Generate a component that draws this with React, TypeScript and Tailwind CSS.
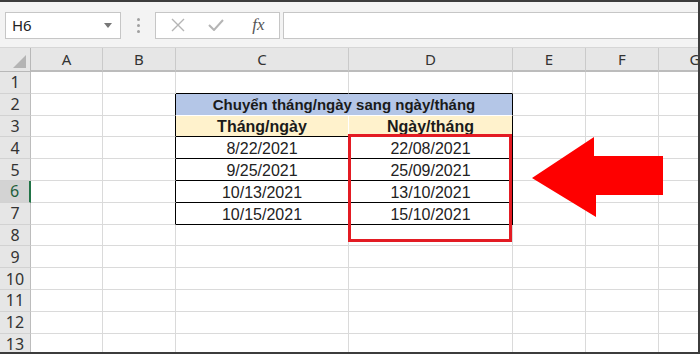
import React from "react"

const COLS = ["A", "B", "C", "D", "E", "F", "G"]
const ROWS = Array.from({ length: 13 }, (_, i) => i + 1)

const dates: Record<number, [string, string]> = {
  4: ["8/22/2021", "22/08/2021"],
  5: ["9/25/2021", "25/09/2021"],
  6: ["10/13/2021", "13/10/2021"],
  7: ["10/15/2021", "15/10/2021"],
}

const ui = { fontFamily: '"Noto Sans", "Open Sans", sans-serif' }
const cellFont = { fontFamily: '"Liberation Sans", Arial, sans-serif' }

function Cell({ row, col }: { row: number; col: string }) {
  const base = "border-r border-b border-[#dadada] bg-white"
  // table lives in C2:D7
  if (row === 1 && (col === "C" || col === "D")) {
    return <div className="border-r border-b border-r-[#dadada] border-b-black bg-white" />
  }
  if (col === "B" && row >= 2 && row <= 7) {
    return <div className="border-r border-b border-r-black border-b-[#dadada] bg-white" />
  }
  if (row === 2 && col === "C") {
    return (
      <div
        className="col-span-2 flex items-center justify-center whitespace-nowrap border-r border-b border-r-black border-b-white bg-[#b4c6e7] pt-[2px] text-[15px] font-bold text-[#1a1a1a]"
        style={cellFont}
      >
        Chuyển tháng/ngày sang ngày/tháng
      </div>
    )
  }
  if (row === 2 && col === "D") return null
  if (row === 3 && (col === "C" || col === "D")) {
    return (
      <div
        className={`flex items-center justify-center whitespace-nowrap border-r border-b border-b-black bg-[#fff2cc] pt-[2px] text-[16px] font-bold text-[#1a1a1a] ${
          col === "C" ? "border-r-white" : "border-r-black"
        }`}
        style={cellFont}
      >
        {col === "C" ? "Tháng/ngày" : "Ngày/tháng"}
      </div>
    )
  }
  if (row >= 4 && row <= 7 && (col === "C" || col === "D")) {
    return (
      <div
        className="flex items-center justify-center whitespace-nowrap border-r border-b border-black bg-white pt-[3px] text-[16px] text-[#222]"
        style={cellFont}
      >
        {dates[row][col === "C" ? 0 : 1]}
      </div>
    )
  }
  return <div className={base} />
}

export default function App() {
  return (
    <div className="relative h-[354px] w-[700px] overflow-hidden border-t-2 border-r-2 border-b-2 border-[#3c3c3c] bg-white">
      {/* Formula bar */}
      <div className="flex h-[46px] items-center border-b border-[#d6d6d6] bg-[#f3f3f3] pl-[5px] pt-[1px]" style={ui}>
        <div className="flex h-[27px] w-[116px] items-center justify-between border border-[#c6c6c6] bg-white pl-[6px] pr-[8px] text-[15px] text-[#222]">
          <span>H6</span>
          <svg width="8" height="5" viewBox="0 0 8 5">
            <path d="M0 0 L8 0 L4 5 Z" fill="#777" />
          </svg>
        </div>
        <div className="flex w-[34px] flex-col items-center gap-[3px]">
          <span className="h-[3px] w-[3px] rounded-full bg-[#a0a0a0]" />
          <span className="h-[3px] w-[3px] rounded-full bg-[#a0a0a0]" />
          <span className="h-[3px] w-[3px] rounded-full bg-[#a0a0a0]" />
        </div>
        <div className="flex h-[27px] w-[125px] items-center border border-[#c6c6c6] bg-white">
          <div className="flex w-[44px] justify-center">
            <svg width="14" height="14" viewBox="0 0 14 14">
              <path d="M1 1 L13 13 M13 1 L1 13" stroke="#b5b5b5" strokeWidth="1.4" />
            </svg>
          </div>
          <div className="flex w-[32px] justify-center">
            <svg width="16" height="12" viewBox="0 0 16 12">
              <path d="M1 6 L6 11 L15 1" stroke="#b5b5b5" strokeWidth="2" fill="none" />
            </svg>
          </div>
          <div
            className="flex flex-1 justify-center pl-[6px] text-[17px] italic text-[#555]"
            style={{ fontFamily: '"Liberation Serif", "Times New Roman", serif' }}
          >
            fx
          </div>
        </div>
        <div className="ml-[3px] h-[27px] flex-1 border border-r-0 border-[#c6c6c6] bg-white" />
      </div>

      {/* Sheet grid */}
      <div
        className="grid grid-cols-[31px_72px_73px_173px_164px_73px_73px_73px_60px] grid-rows-[24px_repeat(13,21.8px)]"
        style={ui}
      >
        {/* corner */}
        <div className="relative border-r border-b border-[#b8b8b8] bg-[#e6e6e6]">
          <svg className="absolute bottom-[3px] right-[4px]" width="13" height="13" viewBox="0 0 13 13">
            <path d="M13 0 L13 13 L0 13 Z" fill="#b4b4b4" />
          </svg>
        </div>
        {COLS.map((c) => (
          <div
            key={c}
            className="flex items-center justify-center border-b-2 border-r border-b-[#bcbcbc] border-r-[#cacaca] bg-[#e6e6e6] pt-[1px] text-[15px] text-[#333]"
          >
            {c}
          </div>
        ))}
        <div className="border-b-2 border-[#bcbcbc] bg-[#e6e6e6]" />

        {ROWS.map((r) => (
          <React.Fragment key={r}>
            <div
              className={`flex items-center justify-center border-b border-b-[#d2d2d2] text-[16px] ${
                r === 6
                  ? "border-r-2 border-r-[#217346] bg-[#d3d3d3] text-[#1e5f3c]"
                  : "border-r border-r-[#bcbcbc] bg-[#e6e6e6] text-[#333]"
              }`}
            >
              {r}
            </div>
            {COLS.map((c) => (
              <Cell key={c} row={r} col={c} />
            ))}
            <div className="border-b border-[#dadada] bg-white" />
          </React.Fragment>
        ))}
      </div>

      {/* red highlight box */}
      <div className="pointer-events-none absolute left-[348px] top-[132px] h-[108px] w-[164px] border-[3px] border-[#e31b23]" />

      {/* red arrow */}
      <svg
        className="pointer-events-none absolute left-[530px] top-[131px]"
        width="136"
        height="86"
        viewBox="0 0 136 86"
      >
        <polygon points="2,45 64,4 64,23 133,23 133,62 66,62 66,84" fill="#fe0000" />
      </svg>
    </div>
  )
}
